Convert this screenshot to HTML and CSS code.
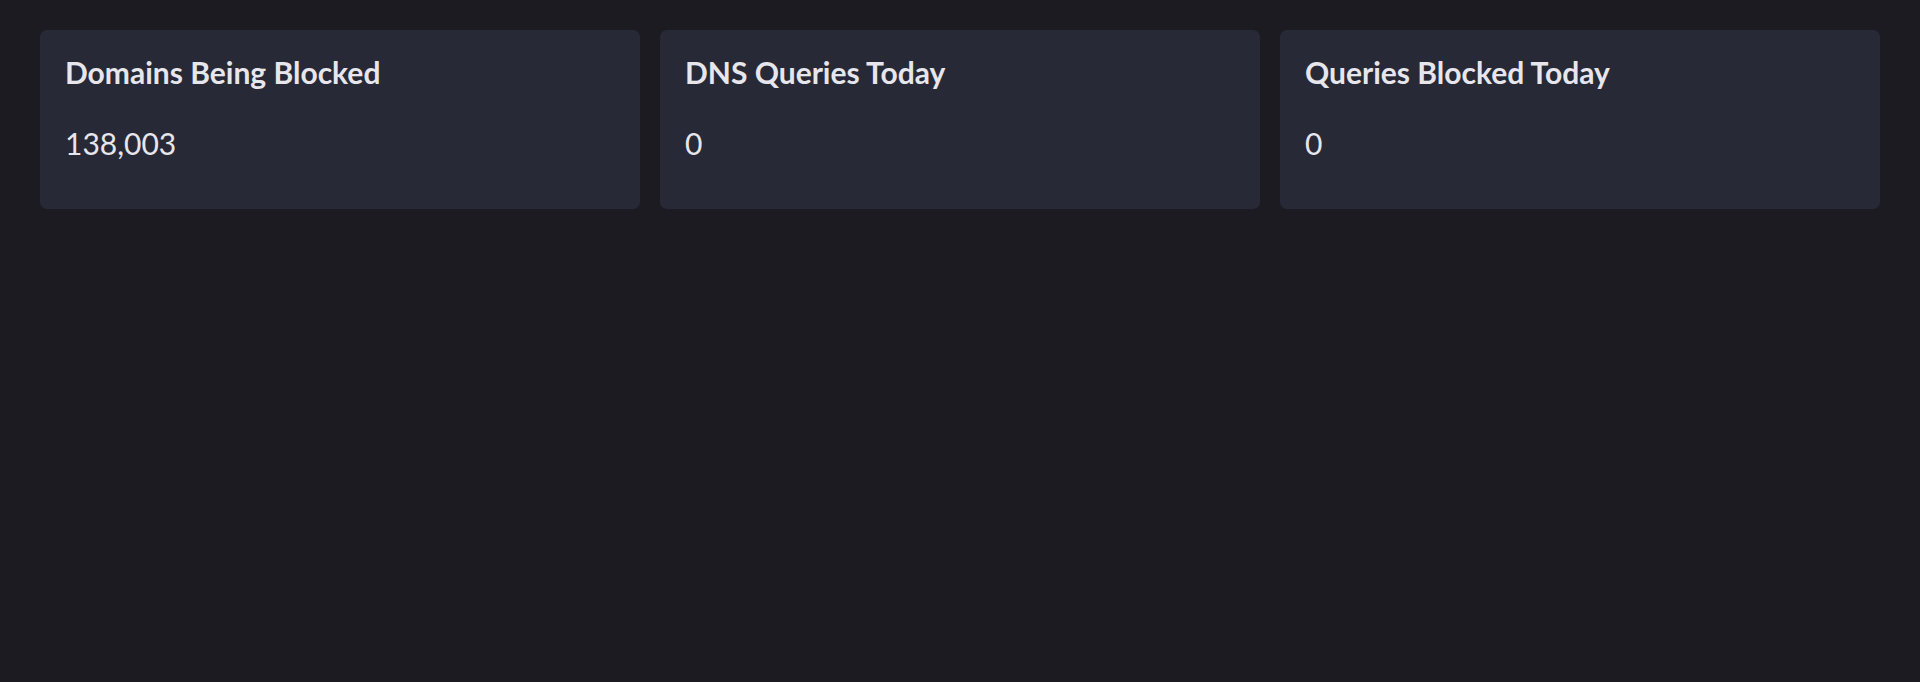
FILE: index.html
```html
<!DOCTYPE html>
<html lang="en">
<head>
<meta charset="utf-8">
<title>Dashboard</title>
<link rel="stylesheet" href="styles.css">
</head>
<body>
<main class="stats">
  <section class="card">
    <h3 class="card-title">Domains Being Blocked</h3>
    <p class="card-value">138,003</p>
  </section>
  <section class="card">
    <h3 class="card-title">DNS Queries Today</h3>
    <p class="card-value">0</p>
  </section>
  <section class="card">
    <h3 class="card-title">Queries Blocked Today</h3>
    <p class="card-value">0</p>
  </section>
</main>
</body>
</html>
```
FILE: styles.css
```css
html, body {
  margin: 0;
  padding: 0;
  background: #1c1b21;
  height: 100%;
}

body {
  font-family: Lato, "Noto Sans", sans-serif;
  color: #e6e6ec;
}

.stats {
  display: grid;
  grid-template-columns: repeat(3, 1fr);
  gap: 20px;
  padding: 30px 40px;
}

.card {
  background: #272936;
  border-radius: 7px;
  padding: 24px 25px 48px;
}

.card-title {
  margin: 0 0 35px;
  font-size: 30px;
  line-height: 36px;
  font-weight: 700;
}

.card-value {
  margin: 0;
  font-size: 30px;
  line-height: 36px;
  font-weight: 400;
}
```
